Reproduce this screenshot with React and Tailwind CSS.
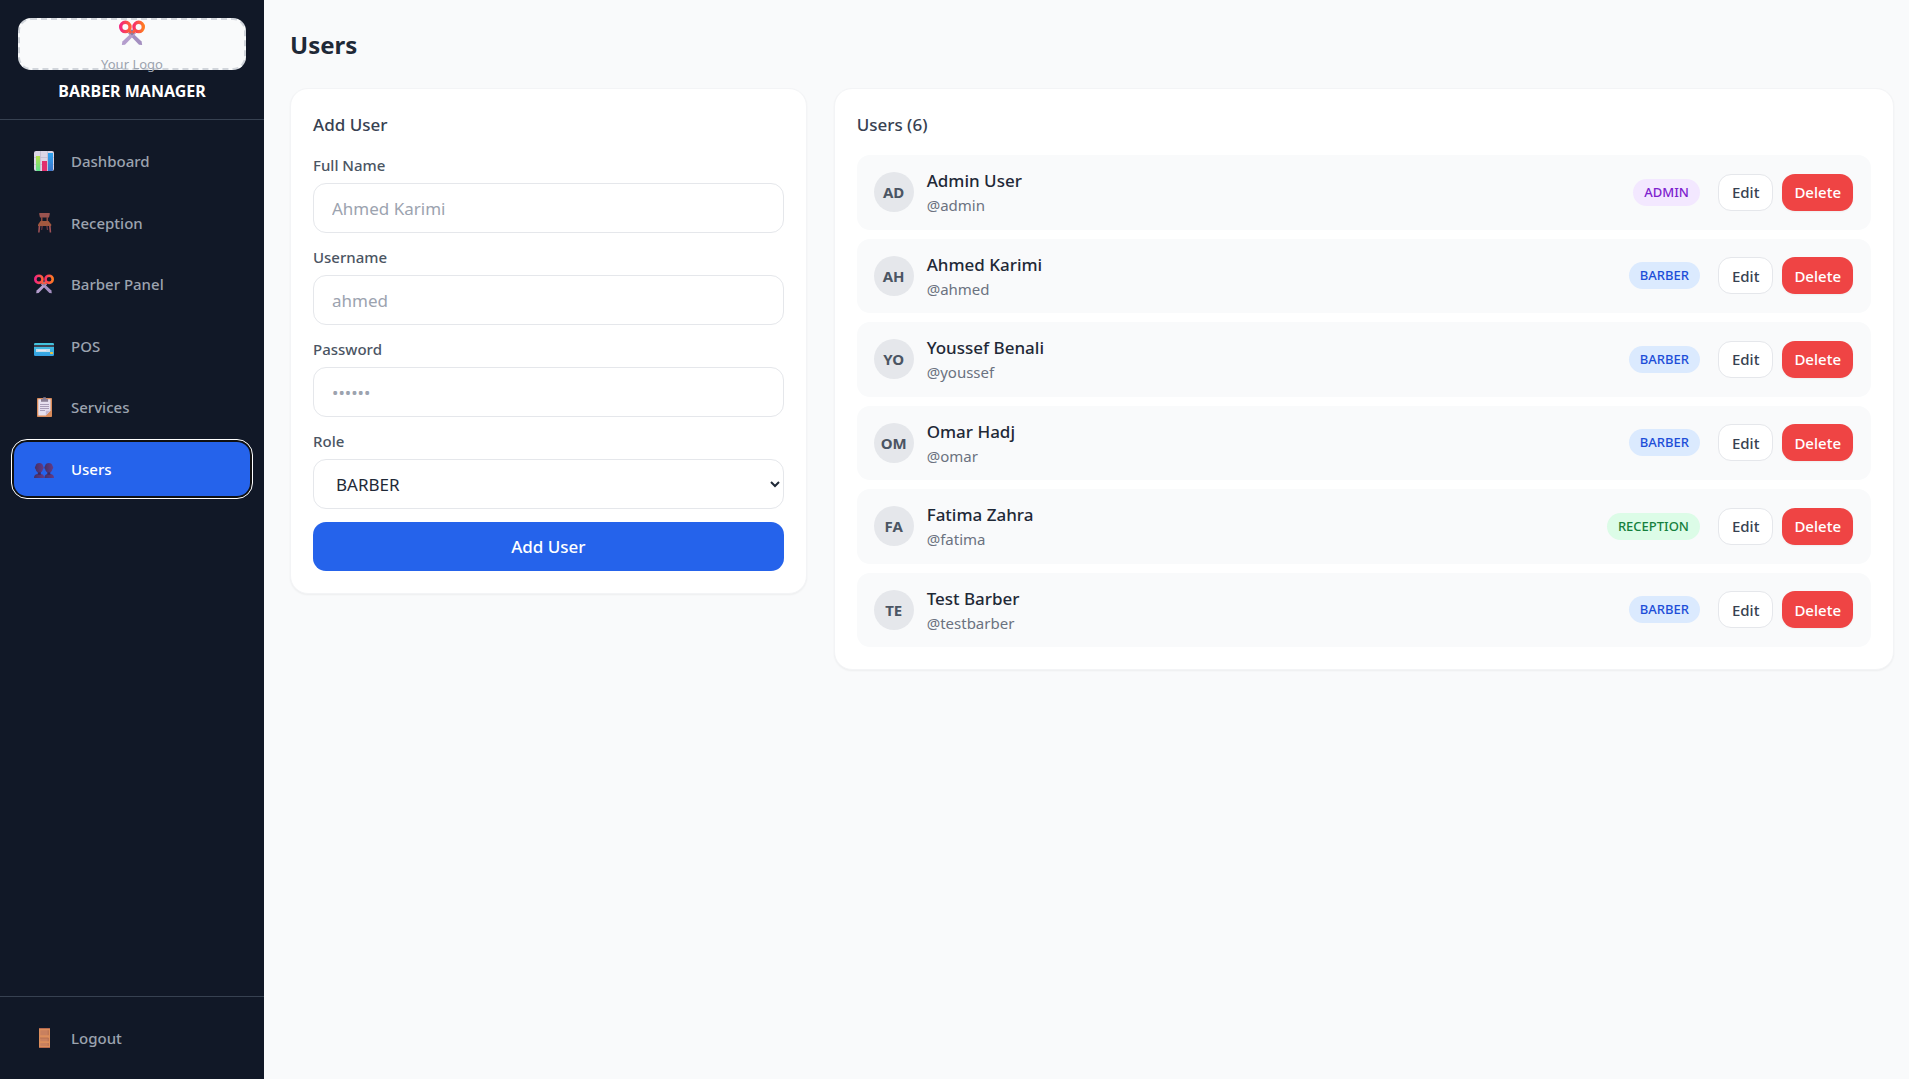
import React, { useState } from 'react';

const ScissorsIcon = ({ className }) => (
    <svg viewBox="0 0 20 20" className={className} fill="none" aria-hidden="true">
        <defs>
            <linearGradient id="handleLeft" x1="0" x2="1">
                <stop offset="0" stopColor="#f3267e" />
                <stop offset="1" stopColor="#ff6038" />
            </linearGradient>
            <linearGradient id="handleRight" x1="0" x2="1">
                <stop offset="0" stopColor="#f72f69" />
                <stop offset="1" stopColor="#ff7a22" />
            </linearGradient>
        </defs>
        <path d="M8.6 8.2 17.4 16.600l.4 2.600-2.400-.2L6.900 10.200z" fill="#a48fc0" />
        <path d="M11.400 8.200 2.600 16.600l-.4 2.600 2.400-.2 8.500-8.800z" fill="#b49dcd" />
        <path d="m10 7 2.400 2.600L10 12 7.600 9.600z" fill="#8d7b9c" />
        <circle cx="4.9" cy="5.300" r="3.600" stroke="url(#handleLeft)" strokeWidth="2.600" />
        <circle cx="15.1" cy="5.300" r="3.600" stroke="url(#handleRight)" strokeWidth="2.600" />
        <path d="m7.200 7.600 2.200 2.300M12.800 7.600l-2.200 2.300" stroke="#ff5a3c" strokeWidth="2" />
    </svg>
);

const ChartIcon = ({ className }) => (
    <svg viewBox="0 0 20 20" className={className} aria-hidden="true">
        <defs>
            <linearGradient id="barGreen" x1="0" y1="0" x2="0" y2="1">
                <stop offset="0" stopColor="#b4e04d" />
                <stop offset="1" stopColor="#5fe08c" />
            </linearGradient>
            <linearGradient id="barBlue" x1="0" y1="0" x2="0" y2="1">
                <stop offset="0" stopColor="#2fa5f2" />
                <stop offset="1" stopColor="#3d74c9" />
            </linearGradient>
        </defs>
        <rect width="20" height="20" rx="2" fill="#ddd6e6" />
        <path d="M0 6.5h20M0 13.5h20M6.5 0v20M13.5 0v20" stroke="#c3bacf" strokeWidth="0.8" />
        <path d="M2 5h4v15H3a1 1 0 0 1-1-1z" fill="url(#barGreen)" />
        <path d="M8 10h5v10H8z" fill="#e32f6e" />
        <path d="M14 2h5v17a1 1 0 0 1-1 1h-4z" fill="url(#barBlue)" />
    </svg>
);

const ChairIcon = ({ className }) => (
    <svg viewBox="0 0 20 20" className={className} aria-hidden="true">
        <path d="M6 0h9c.6 0 .9.400.8 1L15 4.500H6L5.200 1c-.1-.6.2-1 .8-1z" fill="#99534f" />
        <path d="M7 4h1.500v5H7zM12.500 4H14v5h-1.500z" fill="#8a483f" />
        <path d="M6.500 8h8l2.700 3.500V13H4v-1.500z" fill="#a2583f" />
        <path d="M4.600 13h1.700l-.7 6.500H4.100zM15 13h1.700l.5 6.500h-1.500z" fill="#a05258" />
        <path d="M7.500 13h1.300l-.6 4H7.200zM12.300 13h1.300l.5 4h-1.200z" fill="#6f3746" />
    </svg>
);

const CardIcon = ({ className }) => (
    <svg viewBox="0 0 20 20" className={className} aria-hidden="true">
        <defs>
            <linearGradient id="cardFace" x1="0" y1="0" x2="0" y2="1">
                <stop offset="0" stopColor="#45c6dd" />
                <stop offset="1" stopColor="#339fe4" />
            </linearGradient>
        </defs>
        <rect y="7" width="20" height="13" rx="1.3" fill="url(#cardFace)" />
        <path d="M0 9h20v2H0z" fill="#3c4352" />
        <path d="M2 13h14v3H2z" fill="#c3dcec" />
        <path d="M4 14.500h8" stroke="#e8e4ee" strokeWidth="1" />
        <rect x="16" y="16" width="3" height="2" rx="0.5" fill="#e9c146" />
    </svg>
);

const ClipboardIcon = ({ className }) => (
    <svg viewBox="0 0 20 20" className={className} aria-hidden="true">
        <rect x="3" y="1" width="15" height="19" rx="0.8" fill="#d98a59" />
        <path d="M4.300 2.300h12.200v11.500l-4.700 4.700H4.300z" fill="#e7e0ef" />
        <path d="M16.500 13.800h-4.700v4.700z" fill="#c5b8d2" />
        <path d="M7 2h1.700l.7-1.700h2.300l.7 1.700h1.700v2.800H7z" fill="#8b7f94" />
        <path d="M6 7.500h9M6 9.500h9M6 11.500h9M6 13.500h5" stroke="#a99db7" strokeWidth="1" />
    </svg>
);

const PeopleIcon = ({ className }) => (
    <svg viewBox="0 0 20 20" className={className} aria-hidden="true">
        <defs>
            <linearGradient id="peopleShade" x1="0" x2="1">
                <stop offset="0" stopColor="#433065" />
                <stop offset="1" stopColor="#643a86" />
            </linearGradient>
        </defs>
        <g transform="translate(0 1)">
            <path d="M10.400 18c0-3 1.600-4.100 3.300-4.100h2.600c2.200 0 3.700 1.300 3.700 4.100z" fill="url(#peopleShade)" />
            <path d="M11 6.300C11.300 4 12.700 3 14.800 3s3.500 1 3.800 3.300c.9.500.8 2.300-.1 2.600-.3 2.300-1.900 3.900-3.700 3.900s-3.400-1.600-3.700-3.900c-.9-.3-1-2.100-.1-2.600z" fill="url(#peopleShade)" />
            <path d="M0 18c0-2.800 1.500-4.100 3.700-4.100h3c2.100 0 3.500 1.300 3.500 4.100z" fill="url(#peopleShade)" />
            <path d="M1.500 6.300C1.800 4 3.200 3 5.300 3s3.500 1 3.800 3.300c.9.500.8 2.300-.1 2.600-.3 2.300-1.900 3.900-3.700 3.900S1.900 11.200 1.600 8.900c-.9-.3-1-2.100-.1-2.600z" fill="url(#peopleShade)" />
            <path d="M3.800 12.300h3v2.400h-3zM13.300 12.300h3v2.400h-3z" fill="#3d2b60" />
        </g>
    </svg>
);

const DoorIcon = ({ className }) => (
    <svg viewBox="0 0 20 20" className={className} aria-hidden="true">
        <rect x="5" width="11" height="20" fill="#dc8e5c" />
        <path d="M5 0h11v1H5zM5 19h11v1H5z" fill="#b5694f" />
        <path d="M6.300 2.200h8v5h-8zM6.300 10h8v3.300h-8zM6.300 15h8v3h-8z" fill="#c8805f" />
        <path d="M14.300 2.200v5M14.300 10v3.300M6 10h8.500M14.300 15v3" stroke="#ad684f" strokeWidth="0.7" />
    </svg>
);

const NAV_ITEMS = [
    { label: 'Dashboard', Icon: ChartIcon },
    { label: 'Reception', Icon: ChairIcon },
    { label: 'Barber Panel', Icon: ScissorsIcon },
    { label: 'POS', Icon: CardIcon },
    { label: 'Services', Icon: ClipboardIcon },
    { label: 'Users', Icon: PeopleIcon },
];

const USERS = [
    { name: 'Admin User', username: 'admin', role: 'ADMIN' },
    { name: 'Ahmed Karimi', username: 'ahmed', role: 'BARBER' },
    { name: 'Youssef Benali', username: 'youssef', role: 'BARBER' },
    { name: 'Omar Hadj', username: 'omar', role: 'BARBER' },
    { name: 'Fatima Zahra', username: 'fatima', role: 'RECEPTION' },
    { name: 'Test Barber', username: 'testbarber', role: 'BARBER' },
];

const ROLE_STYLES = {
    ADMIN: 'bg-[#f3e8ff] text-[#7e22ce]',
    BARBER: 'bg-[#dbeafe] text-[#1d4ed8]',
    RECEPTION: 'bg-[#dcfce7] text-[#15803d]',
};

const fieldClass = 'block w-full rounded-[13px] border border-[#e5e7eb] bg-white text-[17px] text-[#1f2937] placeholder:text-[#9ca3af] outline-none';

const Sidebar = () => (
    <aside className="w-[264px] shrink-0 flex flex-col bg-[#111827]">
        <div className="px-[18px] pt-[18px] pb-[17px] border-b border-[#374151] text-center">
            <div className="h-[52px] flex flex-col items-center rounded-[13px] border-2 border-dashed border-[#d1d5db] bg-[#f9fafb]">
                <ScissorsIcon className="w-[26px] h-[26px] shrink-0" />
                <span className="mt-2 text-[13px] leading-5 text-[#9ca3af]">Your Logo</span>
            </div>
            <p className="mt-[10px] text-base leading-[22px] font-bold text-white">BARBER MANAGER</p>
        </div>

        <nav className="flex-1 px-[14px] py-[14px] flex flex-col gap-[7px]">
            {NAV_ITEMS.map(({ label, Icon }) => (
                <a
                    key={label}
                    href="#"
                    aria-current={label === 'Users' ? 'page' : undefined}
                    className={`flex items-center gap-[17px] rounded-[13px] px-5 py-4 text-[15px] leading-normal font-medium ${
                        label === 'Users'
                            ? 'bg-[#2563eb] text-white ring-2 ring-[#101010] outline-1 outline-offset-2 outline-white'
                            : 'text-[#9ca3af]'
                    }`}
                >
                    <Icon className="w-5 h-5 shrink-0" />
                    {label}
                </a>
            ))}
        </nav>

        <div className="border-t border-[#374151] p-[14px]">
            <button type="button" className="w-full flex items-center gap-[17px] rounded-[13px] px-5 py-4 text-[15px] leading-normal font-medium text-[#9ca3af]">
                <DoorIcon className="w-5 h-5 shrink-0" />
                Logout
            </button>
        </div>
    </aside>
);

const Field = ({ id, label, children }) => (
    <div>
        <label htmlFor={id} className="block mb-[7px] text-[15px] leading-[21px] font-medium text-[#4b5563]">{label}</label>
        {children}
    </div>
);

const AddUserForm = () => {
    const [form, setForm] = useState({ name: '', username: '', password: '', role: 'BARBER' });
    const update = (key) => (e) => setForm({ ...form, [key]: e.target.value });

    return (
        <form onSubmit={(e) => e.preventDefault()} className="rounded-[18px] border border-[#f3f4f6] bg-white p-[22px] shadow-xs">
            <h2 className="mb-4 text-[17px] leading-7 font-medium text-[#374151]">Add User</h2>
            <div className="flex flex-col gap-[14px]">
                <Field id="name" label="Full Name">
                    <input id="name" type="text" placeholder="Ahmed Karimi" value={form.name} onChange={update('name')} className={`${fieldClass} h-[50px] px-[18px]`} />
                </Field>
                <Field id="username" label="Username">
                    <input id="username" type="text" placeholder="ahmed" value={form.username} onChange={update('username')} className={`${fieldClass} h-[50px] px-[18px]`} />
                </Field>
                <Field id="password" label="Password">
                    <input id="password" type="password" placeholder="••••••" value={form.password} onChange={update('password')} className={`${fieldClass} h-[50px] px-[18px]`} />
                </Field>
                <Field id="role" label="Role">
                    <select id="role" value={form.role} onChange={update('role')} className={`${fieldClass} h-[50px] pl-[18px]`}>
                        <option>BARBER</option>
                        <option>RECEPTION</option>
                        <option>ADMIN</option>
                    </select>
                </Field>
            </div>
            <button type="submit" className="mt-[13px] w-full h-[49px] rounded-[13px] bg-[#2563eb] text-[17px] font-medium text-white">
                Add User
            </button>
        </form>
    );
};

const UserRow = ({ user }) => (
    <li className="flex items-center rounded-[13px] bg-[#f9fafb] pl-[17px] pr-[18px] py-[13px]">
        <div className="w-10 h-10 shrink-0 flex items-center justify-center rounded-full bg-[#e5e7eb] text-[15px] font-bold text-[#4b5563]">
            {user.name.slice(0, 2).toUpperCase()}
        </div>
        <div className="ml-[13px] flex-1">
            <p className="text-[17px] leading-[26px] font-medium text-[#1f2937]">{user.name}</p>
            <p className="text-[15px] leading-normal text-[#6b7280]">@{user.username}</p>
        </div>
        <span className={`rounded-full px-[11px] text-[13px] leading-[27px] font-medium ${ROLE_STYLES[user.role]}`}>{user.role}</span>
        <button type="button" className="ml-[18px] h-[37px] rounded-[13px] border border-[#e5e7eb] bg-white px-[13px] text-[15px] font-medium text-[#374151]">Edit</button>
        <button type="button" className="ml-[9px] h-[37px] rounded-[13px] bg-[#ef4444] px-3 text-[15px] font-medium text-white shadow-xs">Delete</button>
    </li>
);

const App = () => (
    <div className="min-h-screen flex bg-[#f9fafb] font-['Noto_Sans','Open_Sans',sans-serif]">
        <Sidebar />
        <main className="flex-1 pt-[27px] pl-[26px] pr-[15px]">
            <h1 className="mb-[25px] text-2xl leading-9 font-bold text-[#1f2937]">Users</h1>
            <div className="grid grid-cols-3 items-start gap-[27px]">
                <AddUserForm />
                <section className="col-span-2 rounded-[18px] border border-[#f3f4f6] bg-white p-[22px] shadow-xs">
                    <h2 className="mb-4 text-[17px] leading-7 font-medium text-[#374151]">Users ({USERS.length})</h2>
                    <ul className="flex flex-col gap-[9px]">
                        {USERS.map((user) => (
                            <UserRow key={user.username} user={user} />
                        ))}
                    </ul>
                </section>
            </div>
        </main>
    </div>
);

export default App;
